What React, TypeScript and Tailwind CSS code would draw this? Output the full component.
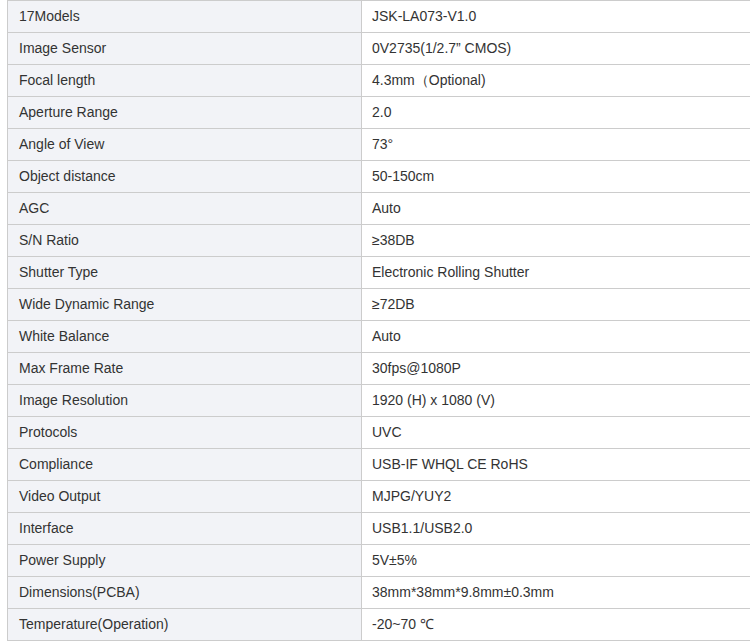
const specs: [string, string][] = [
  ["17Models", "JSK-LA073-V1.0"],
  ["Image Sensor", "0V2735(1/2.7\u201D CMOS)"],
  ["Focal length", "4.3mm\uFF08Optional)"],
  ["Aperture Range", "2.0"],
  ["Angle of View", "73\u00B0"],
  ["Object distance", "50-150cm"],
  ["AGC", "Auto"],
  ["S/N Ratio", "\u226538DB"],
  ["Shutter Type", "Electronic Rolling Shutter"],
  ["Wide Dynamic Range", "\u226572DB"],
  ["White Balance", "Auto"],
  ["Max Frame Rate", "30fps@1080P"],
  ["Image Resolution", "1920 (H) x 1080 (V)"],
  ["Protocols", "UVC"],
  ["Compliance", "USB-IF WHQL CE RoHS"],
  ["Video Output", "MJPG/YUY2"],
  ["Interface", "USB1.1/USB2.0"],
  ["Power Supply", "5V\u00B15%"],
  ["Dimensions(PCBA)", "38mm*38mm*9.8mm\u00B10.3mm"],
  ["Temperature(Operation)", "-20~70 \u2103"],
];

export default function App() {
  return (
    <div className="w-[750px] h-[641px] overflow-hidden bg-white font-['Liberation_Sans',Arial,sans-serif] text-[14px] text-[#333]">
      <div className="ml-[7px] w-[820px] border-l border-b border-[#ccc]">
        {specs.map(([label, value]) => (
          <div key={label} className="flex h-[32px] border-t border-[#ccc]">
            <div className="w-[354px] shrink-0 bg-[#f2f3f7] border-r border-[#ccc] pl-[11px] flex items-center">
              {label}
            </div>
            <div className="flex-1 pl-[10px] flex items-center">{value}</div>
          </div>
        ))}
      </div>
    </div>
  );
}
